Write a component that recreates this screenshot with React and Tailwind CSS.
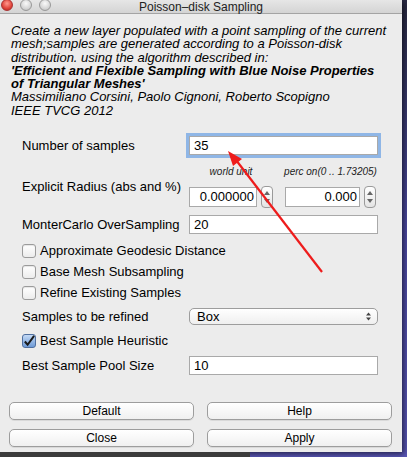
import React from 'react';

const font = { fontFamily: '"Liberation Sans", Arial, sans-serif' };

function Spinner() {
  return (
    <div className="w-[12px] h-[22px] rounded-[4px] border border-[#9a9a9a] bg-gradient-to-b from-white to-[#e4e4e4] flex flex-col items-center justify-center">
      <svg width="6" height="16" viewBox="0 0 6 16">
        <path d="M0 6 L3 2 L6 6 Z" fill="#666" />
        <path d="M0 10 L3 14 L6 10 Z" fill="#666" />
      </svg>
    </div>
  );
}

function TextBox({ value, right, focus, className = '' }) {
  return (
    <div
      className={`h-[19px] bg-white border border-[#a9a9a9] flex items-center text-[13px] text-black ${right ? 'justify-end pr-[2px]' : 'px-[4px]'} ${focus ? 'ring-[3px] ring-[#8fb6e6] border-[#6f95c6]' : ''} ${className}`}
    >
      {value}
    </div>
  );
}

function Check({ checked, label }) {
  return (
    <div className="flex items-center h-[21px]">
      {checked ? (
        <div className="w-[14px] h-[14px] rounded-[3px] border border-[#4f6f9f] bg-gradient-to-b from-[#c4daf5] to-[#6e9ad6] flex items-center justify-center">
          <svg width="13" height="13" viewBox="0 0 13 13">
            <path d="M2 6.5 L5 10 L12 0.5" stroke="#1a1a1a" strokeWidth="2.2" fill="none" />
          </svg>
        </div>
      ) : (
        <div className="w-[14px] h-[14px] rounded-[3px] border border-[#9b9b9b] bg-gradient-to-b from-white to-[#ececec] shadow-[inset_0_1px_1px_rgba(0,0,0,0.1)]" />
      )}
      <span className="ml-[4px] text-[13px] text-black">{label}</span>
    </div>
  );
}

function Row({ label, children, className = '' }) {
  return (
    <div className={`flex items-center ${className}`}>
      <span className="w-[167px] text-[13px] text-black">{label}</span>
      <div className="w-[189px]">{children}</div>
    </div>
  );
}

function Btn({ children }) {
  return (
    <button className="w-[185px] h-[18px] rounded-[5px] border border-[#9d9d9d] bg-gradient-to-b from-white to-[#f0f0f0] text-[12px] text-black flex items-center justify-center shadow-[0_1px_0_rgba(0,0,0,0.08)]">
      {children}
    </button>
  );
}

export default function App() {
  return (
    <div className="relative w-[407px] h-[457px] overflow-hidden bg-gradient-to-b from-[#2a2a44] via-[#4d4aa6] to-[#5a57b8]" style={font}>
      <div className="w-[402px] h-[452px] bg-[#ececec] flex flex-col shadow-[2px_2px_6px_rgba(0,0,0,0.6)]">
        {/* title bar */}
        <div className="relative h-[14px] bg-gradient-to-b from-[#e6e6e6] to-[#d4d4d4] border-b border-[#a4a4a4] flex items-center justify-center">
          <div className="absolute left-[1px] top-[-1px] flex gap-[7px]">
            <div className="w-[12px] h-[12px] rounded-full bg-[radial-gradient(circle_at_50%_35%,#ff9a8f,#e0443a_60%,#a8221a)] border border-[#a33]" />
            <div className="w-[12px] h-[12px] rounded-full bg-[radial-gradient(circle_at_50%_35%,#fafafa,#d0d0d0_70%,#a8a8a8)] border border-[#999]" />
            <div className="w-[12px] h-[12px] rounded-full bg-[radial-gradient(circle_at_50%_35%,#fafafa,#d0d0d0_70%,#a8a8a8)] border border-[#999]" />
          </div>
          <span className="text-[12px] text-[#222] leading-[12px]">Poisson–disk Sampling</span>
        </div>

        {/* description */}
        <div className="pl-[11px] pt-[10px] text-[13px] leading-[13.3px] italic text-black">
          <div>Create a new layer populated with a point sampling of the current</div>
          <div>mesh;samples are generated according to a Poisson-disk</div>
          <div>distribution. using the algorithm described in:</div>
          <div className="font-bold">'Efficient and Flexible Sampling with Blue Noise Properties</div>
          <div className="font-bold">of Triangular Meshes'</div>
          <div>Massimiliano Corsini, Paolo Cignoni, Roberto Scopigno</div>
          <div>IEEE TVCG 2012</div>
        </div>

        <div className="pl-[22px] flex flex-col">
          <Row label="Number of samples" className="mt-[19px]">
            <TextBox value="35" focus />
          </Row>

          <div className="flex items-center mt-[10px]">
            <span className="w-[167px] text-[13px] text-black">Explicit Radius (abs and %)</span>
            <div className="flex gap-[12px]">
              <div className="w-[84px] flex flex-col items-center">
                <span className="text-[10px] italic leading-[12px] text-[#222] whitespace-nowrap">world unit</span>
                <div className="flex items-center gap-[4px] mt-[8px]">
                  <TextBox value="0.000000" right className="w-[68px] h-[20px]" />
                  <Spinner />
                </div>
              </div>
              <div className="w-[91px] flex flex-col items-center">
                <span className="text-[10px] italic leading-[12px] text-[#222] whitespace-nowrap">perc on(0 .. 1.73205)</span>
                <div className="flex items-center gap-[4px] mt-[8px]">
                  <TextBox value="0.000" right className="w-[75px] h-[20px]" />
                  <Spinner />
                </div>
              </div>
            </div>
          </div>

          <Row label="MonterCarlo OverSampling" className="mt-[7px]">
            <TextBox value="20" />
          </Row>

          <div className="mt-[6px] flex flex-col">
            <Check label="Approximate Geodesic Distance" />
            <Check label="Base Mesh Subsampling" />
            <Check label="Refine Existing Samples" />
          </div>

          <Row label="Samples to be refined" className="mt-[4px]">
            <div className="h-[17px] rounded-[5px] border border-[#9d9d9d] bg-gradient-to-b from-white to-[#efefef] flex items-center justify-between pl-[7px] pr-[6px] text-[13px] text-black">
              <span>Box</span>
              <svg width="5" height="9" viewBox="0 0 5 9">
                <path d="M0 3.5 L2.5 0.5 L5 3.5 Z" fill="#444" />
                <path d="M0 5.5 L2.5 8.5 L5 5.5 Z" fill="#444" />
              </svg>
            </div>
          </Row>

          <div className="mt-[4px]">
            <Check checked label="Best Sample Heuristic" />
          </div>

          <Row label="Best Sample Pool Size" className="mt-[4px]">
            <TextBox value="10" />
          </Row>
        </div>

        <div className="mt-auto mb-[5px] pl-[9px] flex flex-col gap-[9px]">
          <div className="flex gap-[13px]">
            <Btn>Default</Btn>
            <Btn>Help</Btn>
          </div>
          <div className="flex gap-[13px]">
            <Btn>Close</Btn>
            <Btn>Apply</Btn>
          </div>
        </div>
      </div>
      <div className="h-[5px] w-[250px] bg-[#3b3b3b]" />

      {/* red annotation arrow */}
      <svg className="absolute left-0 top-0 pointer-events-none" width="407" height="457" viewBox="0 0 407 457">
        <line x1="322" y1="272" x2="236" y2="160" stroke="#ee1c1c" strokeWidth="2.2" />
        <path d="M228 151 L242 159 L233 166 Z" fill="#ee1c1c" />
      </svg>
    </div>
  );
}
